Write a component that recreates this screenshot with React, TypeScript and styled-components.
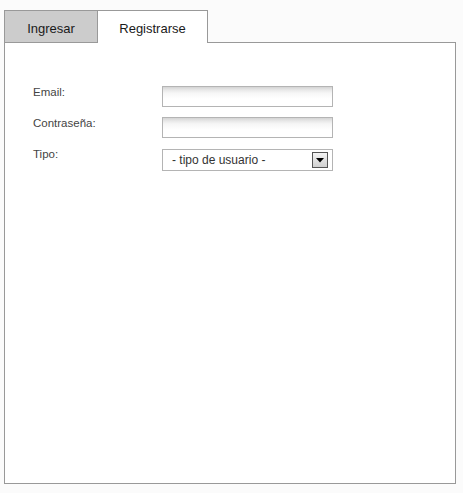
import React from "react";
import styled, { createGlobalStyle } from "styled-components";

const Global = createGlobalStyle`
  html, body { margin: 0; padding: 0; background: #fbfbfb; }
  body { font-family: "Liberation Sans", Arial, sans-serif; }
`;

const Page = styled.div`
  padding: 10px 0 0 4px;
  width: 452px;
`;

const TabBar = styled.div`
  display: flex;
  position: relative;
  z-index: 1;
`;

const Tab = styled.div<{ $active?: boolean; $width: number; $first?: boolean }>`
  box-sizing: border-box;
  width: ${(p) => p.$width}px;
  height: ${(p) => (p.$active ? 33 : 32)}px;
  margin-bottom: ${(p) => (p.$active ? -1 : 0)}px;
  border-top: 1px solid #999;
  border-right: 1px solid #999;
  border-left: ${(p) => (p.$first ? "1px solid #999" : "none")};
  background: ${(p) => (p.$active ? "#ffffff" : "#cccccc")};
  color: #1a1a1a;
  font-size: 13px;
  display: flex;
  justify-content: center;
  padding-top: 10px;
  line-height: 15px;
`;

const Panel = styled.div`
  box-sizing: border-box;
  width: 452px;
  height: 442px;
  border: 1px solid #999;
  background: #fff;
  padding: 43px 0 0 28px;
`;

const Form = styled.div`
  display: grid;
  grid-template-columns: 129px 171px;
  row-gap: 10px;
`;

const Label = styled.label`
  font-size: 11.5px;
  color: #444;
  line-height: 13px;
`;

const TextInput = styled.input`
  box-sizing: border-box;
  width: 171px;
  height: 21px;
  margin: 0;
  border: 1px solid #b4b4b4;
  background: linear-gradient(to bottom, #d4d4d4 0px, #e8e8e8 3px, #f6f6f6 6px, #fff 12px);
  outline: none;
  padding: 0 4px;
  font-family: "Liberation Sans", Arial, sans-serif;
  font-size: 12px;
`;

const Select = styled.div`
  box-sizing: border-box;
  width: 171px;
  height: 22px;
  margin-top: 1px;
  border: 1px solid #b4b4b4;
  background: #fff;
  display: flex;
  align-items: center;
  justify-content: space-between;
  padding: 0 4px 0 9px;
  font-size: 12px;
  color: #333;
`;

const ArrowButton = styled.div`
  box-sizing: border-box;
  width: 16px;
  height: 16px;
  border: 1px solid #555;
  background: linear-gradient(to bottom, #f4f4f4, #d0d0d0);
  display: flex;
  align-items: center;
  justify-content: center;
`;

export default function App() {
  return (
    <>
      <Global />
      <Page>
        <TabBar>
          <Tab $width={94} $first>
            Ingresar
          </Tab>
          <Tab $width={110} $active>
            Registrarse
          </Tab>
        </TabBar>
        <Panel>
          <Form>
            <Label>Email:</Label>
            <TextInput type="text" />
            <Label>Contraseña:</Label>
            <TextInput type="password" />
            <Label>Tipo:</Label>
            <Select>
              <span>- tipo de usuario -</span>
              <ArrowButton>
                <svg width="8" height="5" viewBox="0 0 8 5">
                  <path d="M0 0h8L4 4.5z" fill="#000" />
                </svg>
              </ArrowButton>
            </Select>
          </Form>
        </Panel>
      </Page>
    </>
  );
}
